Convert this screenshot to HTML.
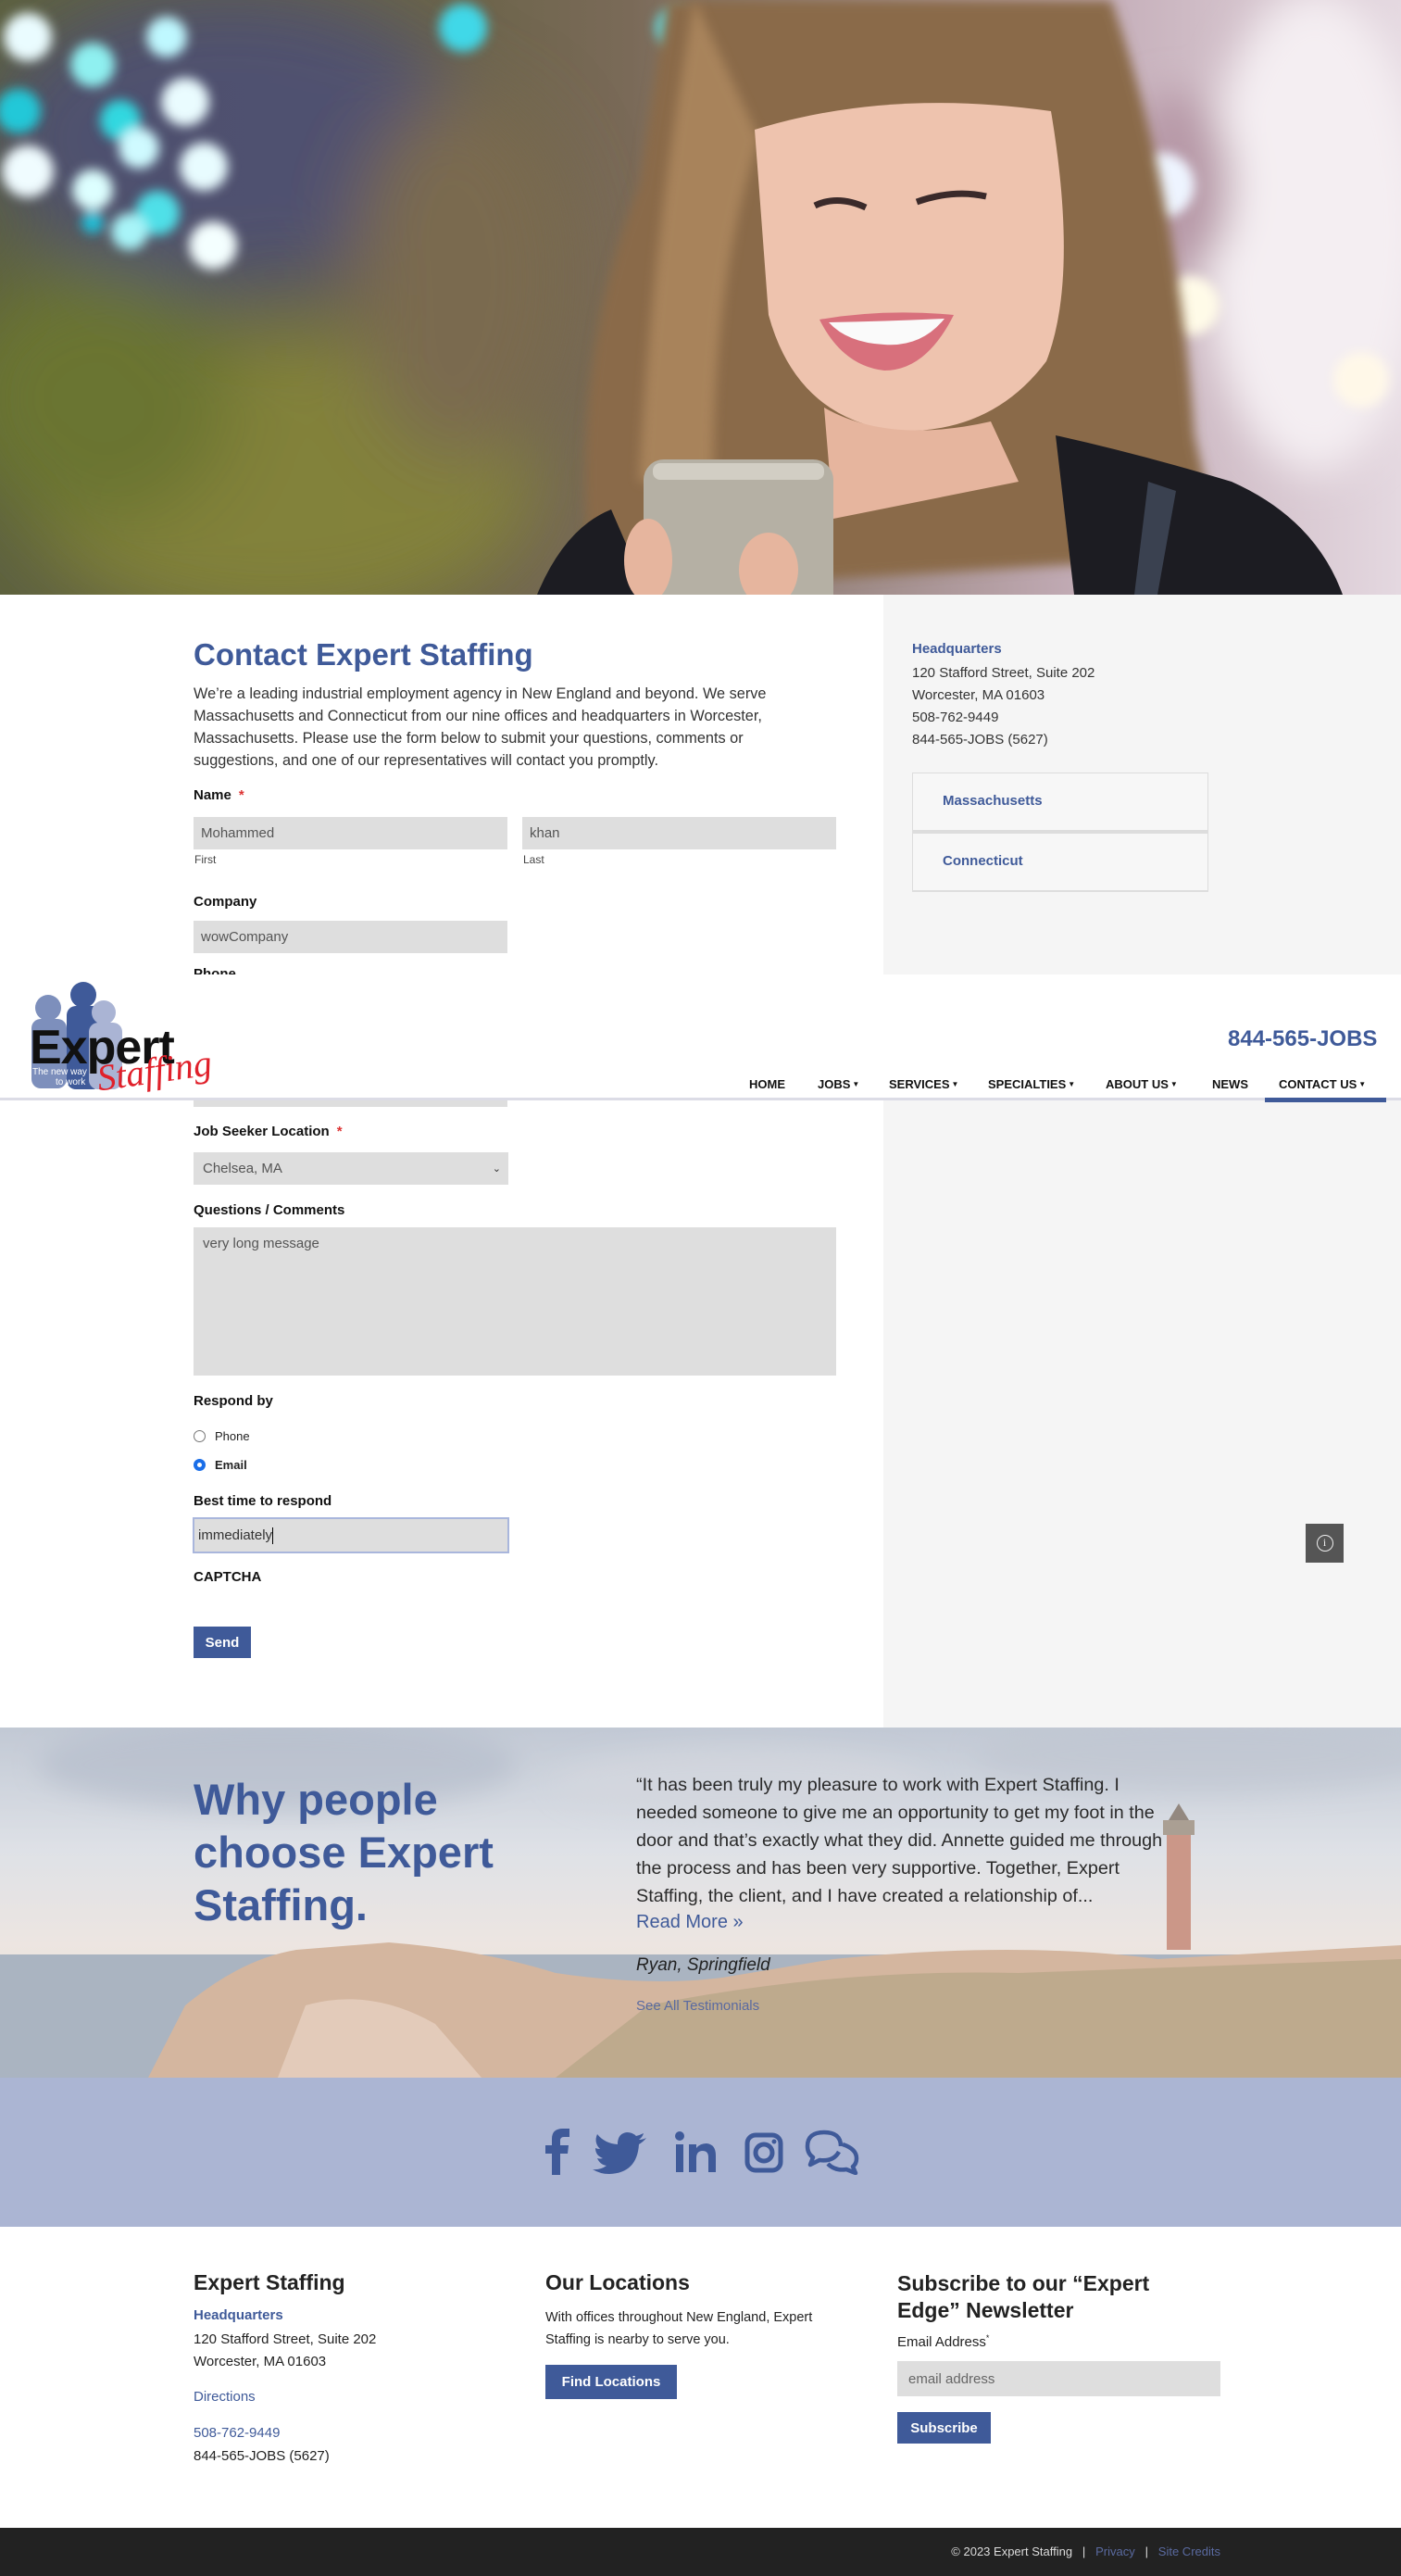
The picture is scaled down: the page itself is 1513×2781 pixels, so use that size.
<!DOCTYPE html>
<html><head><meta charset="utf-8">
<style>
*{margin:0;padding:0;box-sizing:border-box}
body{width:1513px;height:2781px;position:relative;font-family:"Liberation Sans",sans-serif;color:#222;background:#fff;overflow:hidden}
.a{position:absolute;white-space:nowrap}
.lbl{font-weight:bold;font-size:15px;color:#111}
.req{color:#d33;margin-left:8px}
.inp{position:absolute;background:#dedede;font-size:15px;color:#555;padding-left:8px;display:flex;align-items:center}
.blue{color:#3f5a99}
.btn{position:absolute;background:#3f5a99;color:#fff;font-weight:bold;font-size:15px;display:flex;align-items:center;justify-content:center}
.nav{position:absolute;top:1163px;font-size:13px;font-weight:bold;color:#111}
.car{font-size:8px;vertical-align:2px;margin-left:2px}
</style></head><body>

<!-- HERO -->
<svg class="a" style="left:0;top:0" width="1513" height="642" viewBox="0 0 1513 642">
<defs>
<filter id="b1"><feGaussianBlur stdDeviation="22"/></filter>
<filter id="b2"><feGaussianBlur stdDeviation="6"/></filter>
<filter id="b4"><feGaussianBlur stdDeviation="40"/></filter>
<linearGradient id="bg" x1="0" y1="0" x2="1" y2="0">
<stop offset="0" stop-color="#5d6140"/><stop offset=".3" stop-color="#6a6448"/><stop offset=".45" stop-color="#7a6a58"/><stop offset=".78" stop-color="#c4adb8"/><stop offset="1" stop-color="#e4d8e0"/></linearGradient>
</defs>
<rect width="1513" height="642" fill="url(#bg)"/>
<g filter="url(#b4)">
<ellipse cx="250" cy="150" rx="260" ry="160" fill="#4a4e7a" opacity=".8"/>
<ellipse cx="300" cy="520" rx="280" ry="160" fill="#8a8a3a" opacity=".8"/>
<ellipse cx="100" cy="430" rx="150" ry="140" fill="#6a7430"/>
<ellipse cx="500" cy="300" rx="120" ry="200" fill="#7a6a50"/>
</g>
<g filter="url(#b1)">
<ellipse cx="1420" cy="250" rx="120" ry="260" fill="#f4eef2"/>
<ellipse cx="1270" cy="200" rx="60" ry="100" fill="#b89aa8"/>
</g>
<g filter="url(#b2)">
<circle cx="30" cy="40" r="26" fill="#eafcff"/><circle cx="100" cy="70" r="24" fill="#8ff0f0"/>
<circle cx="180" cy="40" r="22" fill="#bff8ff"/><circle cx="200" cy="110" r="26" fill="#eafcff"/>
<circle cx="130" cy="130" r="22" fill="#30d8e0"/><circle cx="20" cy="120" r="24" fill="#20c8d8"/>
<circle cx="150" cy="160" r="22" fill="#cffaff"/><circle cx="220" cy="180" r="26" fill="#e8fcff"/>
<circle cx="30" cy="185" r="28" fill="#f0fcff"/><circle cx="100" cy="205" r="22" fill="#dff"/>
<circle cx="170" cy="230" r="24" fill="#50e0e8"/><circle cx="230" cy="265" r="26" fill="#f4ffff"/>
<circle cx="140" cy="250" r="20" fill="#a8f4f8"/><circle cx="100" cy="240" r="12" fill="#20c0d8"/>
<circle cx="500" cy="30" r="26" fill="#40d8e8"/><circle cx="730" cy="30" r="22" fill="#60e8f0"/>
<circle cx="1255" cy="200" r="35" fill="#eef4ff"/><circle cx="1285" cy="330" r="32" fill="#fffbe8"/>
<circle cx="1470" cy="410" r="30" fill="#fff8e8"/>
</g>
<!-- hair -->
<path d="M720 0 L1200 0 Q1270 200 1290 470 L1320 600 L640 640 Q610 400 690 200 Z" fill="#8a6a48" filter="url(#b2)"/>
<path d="M750 0 Q705 250 690 520 L770 520 Q770 300 820 150 Z" fill="#b08a60" opacity=".8" filter="url(#b2)"/>
<!-- face -->
<path d="M815 140 Q960 95 1135 120 Q1165 300 1130 390 Q1070 470 965 465 Q860 450 830 340 Z" fill="#eec3ae"/>
<path d="M890 440 Q960 480 1070 455 L1100 520 L900 560 Z" fill="#e6b59e"/>
<path d="M880 222 Q905 210 935 224" stroke="#3a2a2a" stroke-width="7" fill="none"/>
<path d="M990 218 Q1030 204 1065 212" stroke="#3a2a2a" stroke-width="7" fill="none"/>
<path d="M885 345 Q955 333 1030 340 Q1000 400 955 400 Q910 395 885 345 Z" fill="#d8707c"/>
<path d="M895 348 Q955 347 1020 344 Q995 375 955 372 Q915 370 895 348 Z" fill="#fafafa"/>
<!-- jacket -->
<path d="M1140 470 Q1230 490 1330 520 Q1420 560 1450 642 L1160 642 Z" fill="#1c1c22"/>
<path d="M580 642 Q610 570 660 550 L700 642 Z" fill="#1c1c22"/>
<path d="M1240 520 L1270 530 L1250 642 L1225 642 Z" fill="#3a4150"/>
<!-- phone -->
<rect x="695" y="496" width="205" height="170" rx="22" fill="#b5b0a4"/>
<rect x="705" y="500" width="185" height="18" rx="8" fill="#d2cec4"/>
<ellipse cx="830" cy="615" rx="32" ry="40" fill="#e6b59e"/>
<ellipse cx="700" cy="605" rx="26" ry="45" fill="#e6b59e"/>
</svg>

<!-- CONTENT -->
<div class="a" style="left:954px;top:642px;width:559px;height:1223px;background:#f5f5f5"></div>
<div class="a blue" style="left:209px;top:688px;font-size:33px;font-weight:bold">Contact Expert Staffing</div>
<div class="a" style="left:209px;top:737px;font-size:16.3px;line-height:24px;color:#333">We’re a leading industrial employment agency in New England and beyond. We serve<br>Massachusetts and Connecticut from our nine offices and headquarters in Worcester,<br>Massachusetts. Please use the form below to submit your questions, comments or<br>suggestions, and one of our representatives will contact you promptly.</div>
<div class="a lbl" style="left:209px;top:850px">Name<span class="req">*</span></div>
<div class="inp" style="left:209px;top:882px;width:339px;height:35px">Mohammed</div>
<div class="inp" style="left:564px;top:882px;width:339px;height:35px">khan</div>
<div class="a" style="left:210px;top:921px;font-size:12px;color:#444">First</div>
<div class="a" style="left:565px;top:921px;font-size:12px;color:#444">Last</div>
<div class="a lbl" style="left:209px;top:965px">Company</div>
<div class="inp" style="left:209px;top:994px;width:339px;height:35px">wowCompany</div>
<div class="a lbl" style="left:209px;top:1043px">Phone</div>
<div class="inp" style="left:209px;top:1075px;width:339px;height:120px"></div>

<div class="a lbl" style="left:209px;top:1213px">Job Seeker Location<span class="req">*</span></div>
<div class="inp" style="left:209px;top:1244px;width:340px;height:35px;padding-left:10px">Chelsea, MA<span style="position:absolute;right:8px;font-size:11px;color:#333">&#8964;</span></div>
<div class="a lbl" style="left:209px;top:1298px">Questions / Comments</div>
<div class="inp" style="left:209px;top:1325px;width:694px;height:160px;align-items:flex-start;padding:9px 10px">very long message</div>
<div class="a lbl" style="left:209px;top:1504px">Respond by</div>
<div class="a" style="left:209px;top:1543px;font-size:13px;color:#222;display:flex;align-items:center"><span style="width:13px;height:13px;border:1px solid #777;border-radius:50%;display:inline-block;margin-right:10px"></span>Phone</div>
<div class="a" style="left:209px;top:1574px;font-size:13px;font-weight:bold;display:flex;align-items:center"><span style="width:13px;height:13px;border:4px solid #1a6ee8;border-radius:50%;display:inline-block;margin-right:10px;background:#fff"></span>Email</div>
<div class="a lbl" style="left:209px;top:1612px">Best time to respond</div>
<div class="inp" style="left:208px;top:1638px;width:342px;height:39px;border:2px solid #a9b6dc;padding-left:4px;color:#333">immediately<span style="width:1px;height:18px;background:#000;display:inline-block"></span></div>
<div class="a lbl" style="left:209px;top:1694px">CAPTCHA</div>
<div class="btn" style="left:209px;top:1756px;width:62px;height:34px">Send</div>
<div class="a" style="left:1410px;top:1645px;width:41px;height:42px;background:#555;display:flex;align-items:center;justify-content:center"><span style="width:18px;height:18px;border:1.5px solid #eee;border-radius:50%;color:#eee;font-size:12px;text-align:center;line-height:15px;font-family:'Liberation Serif',serif">i</span></div>

<!-- sidebar -->
<div class="a blue" style="left:985px;top:692px;font-size:15px;font-weight:bold">Headquarters</div>
<div class="a" style="left:985px;top:715px;font-size:15px;line-height:24px;color:#333">120 Stafford Street, Suite 202<br>Worcester, MA 01603<br>508-762-9449<br>844-565-JOBS (5627)</div>
<div class="a" style="left:985px;top:834px;width:320px;height:65px;background:#f7f7f7;border:1px solid #ddd;border-bottom:3px solid #ddd"></div>
<div class="a" style="left:985px;top:899px;width:320px;height:64px;background:#f7f7f7;border:1px solid #ddd;border-bottom:2px solid #ddd"></div>
<div class="a blue" style="left:1018px;top:856px;font-size:15px;font-weight:bold">Massachusetts</div>
<div class="a blue" style="left:1018px;top:921px;font-size:15px;font-weight:bold">Connecticut</div>

<!-- HEADER overlay -->
<div class="a" style="left:0;top:1052px;width:1513px;height:136px;background:#fff;border-bottom:3px solid #dcdce6"></div>
<svg class="a" style="left:30px;top:1060px" width="210" height="125" viewBox="0 0 210 125">
<circle cx="22" cy="28" r="14" fill="#7d8fbc"/><rect x="4" y="40" width="38" height="75" rx="10" fill="#7d8fbc"/>
<circle cx="60" cy="14" r="14" fill="#3f5a99"/><rect x="42" y="26" width="38" height="90" rx="10" fill="#3f5a99"/>
<circle cx="82" cy="33" r="13" fill="#aab4d4"/><rect x="66" y="44" width="36" height="72" rx="10" fill="#aab4d4"/>
<text x="2" y="88" font-family="Liberation Sans" font-weight="bold" font-size="52" fill="#111" letter-spacing="-1">Expert</text>
<text x="5" y="100" font-family="Liberation Sans Narrow,Liberation Sans" font-size="10" fill="#fff">The new way</text>
<text x="30" y="111" font-family="Liberation Sans Narrow,Liberation Sans" font-size="10" fill="#fff">to work</text>
<text x="75" y="110" font-family="Liberation Serif" font-style="italic" font-size="40" fill="#e0202a" transform="rotate(-8 130 100)">Staffing</text>
</svg>
<div class="a blue" style="left:1326px;top:1108px;font-size:24px;font-weight:bold">844-565-JOBS</div>
<div class="nav" style="left:809px">HOME</div>
<div class="nav" style="left:883px">JOBS<span class="car">▼</span></div>
<div class="nav" style="left:960px">SERVICES<span class="car">▼</span></div>
<div class="nav" style="left:1067px">SPECIALTIES<span class="car">▼</span></div>
<div class="nav" style="left:1194px">ABOUT US<span class="car">▼</span></div>
<div class="nav" style="left:1309px">NEWS</div>
<div class="nav blue" style="left:1381px">CONTACT US<span class="car">▼</span></div>
<div class="a" style="left:1366px;top:1185px;width:131px;height:5px;background:#3f5a99"></div>

<!-- TESTIMONIAL -->
<svg class="a" style="left:0;top:1865px" width="1513" height="378" viewBox="0 0 1513 378">
<defs>
<linearGradient id="sky" x1="0" y1="0" x2="0" y2="1"><stop offset="0" stop-color="#aab4c4"/><stop offset=".35" stop-color="#d2d6de"/><stop offset=".62" stop-color="#e6dcd6"/><stop offset="1" stop-color="#d9cfc8"/></linearGradient>
<filter id="b3"><feGaussianBlur stdDeviation="14"/></filter>
</defs>
<rect width="1513" height="378" fill="url(#sky)"/>
<g filter="url(#b3)" opacity=".7"><ellipse cx="300" cy="40" rx="260" ry="50" fill="#9aa4b8"/><ellipse cx="1300" cy="30" rx="250" ry="40" fill="#a8b0c0"/><ellipse cx="800" cy="60" rx="200" ry="40" fill="#c4c8d2"/></g>
<rect y="245" width="1513" height="133" fill="#8a98aa"/>
<path d="M160 378 L200 300 Q260 250 320 240 L420 232 Q520 240 600 265 Q700 280 780 270 L900 250 Q1100 230 1250 250 L1513 235 L1513 378 Z" fill="#c49a7a"/>
<path d="M600 378 L700 300 Q900 260 1100 265 L1513 250 L1513 378 Z" fill="#a68a62"/>
<path d="M330 300 Q400 280 470 320 L520 378 L300 378 Z" fill="#d9b8a0"/>
<rect x="1260" y="115" width="26" height="125" fill="#b8705a"/><rect x="1256" y="100" width="34" height="16" fill="#8a7a6a"/><path d="M1262 100 L1273 82 L1284 100 Z" fill="#6a5a50"/>
<rect width="1513" height="378" fill="#fff" opacity=".28"/>
</svg>
<div class="a blue" style="left:209px;top:1914px;font-size:47px;font-weight:bold;line-height:57px">Why people<br>choose Expert<br>Staffing.</div>
<div class="a" style="left:687px;top:1912px;font-size:19.8px;line-height:30px;color:#2a2a2a">“It has been truly my pleasure to work with Expert Staffing. I<br>needed someone to give me an opportunity to get my foot in the<br>door and that’s exactly what they did. Annette guided me through<br>the process and has been very supportive. Together, Expert<br>Staffing, the client, and I have created a relationship of...</div>
<div class="a blue" style="left:687px;top:2064px;font-size:20px">Read More »</div>
<div class="a" style="left:687px;top:2111px;font-size:19px;font-style:italic;color:#222">Ryan, Springfield</div>
<div class="a" style="left:687px;top:2157px;font-size:15px;color:#5a6aa0">See All Testimonials</div>

<!-- SOCIAL -->
<div class="a" style="left:0;top:2243px;width:1513px;height:161px;background:#abb5d3"></div>
<svg class="a" style="left:580px;top:2298px" width="360" height="50" viewBox="0 0 360 50" fill="#3f5a99">
<path d="M16 50 V27 H9 V18 H16 V11 Q16 0 28 0 H35 V9 H29 Q25 9 25 13 V18 H34 L33 27 H25 V50 Z"/>
<path d="M118 10 Q114 12 110 12 Q114 9 115 5 Q111 7 107 8 Q103 4 97 4 Q88 5 87 15 V17 Q73 16 65 6 Q61 15 68 22 Q65 22 63 21 Q63 29 71 32 Q68 33 65 32 Q68 39 75 40 Q68 45 60 44 Q68 49 78 49 Q108 48 110 17 Q115 14 118 10 Z"/>
<rect x="150" y="17" width="8" height="30"/><circle cx="154" cy="8" r="5"/>
<path d="M164 17 H172 V21 Q176 16 183 16 Q193 17 193 29 V47 H185 V31 Q185 24 179 24 Q172 24 172 32 V47 H164 Z"/>
<rect x="227" y="7" width="36" height="38" rx="9" fill="none" stroke="#3f5a99" stroke-width="5"/><circle cx="245" cy="26" r="9" fill="none" stroke="#3f5a99" stroke-width="5"/><circle cx="256" cy="14" r="2.5"/>
<path d="M310 4 Q292 4 292 19 Q292 27 298 31 L295 39 L305 34 Q320 36 326 25" fill="none" stroke="#3f5a99" stroke-width="4.5" stroke-linejoin="round"/>
<path d="M310 4 Q328 4 328 19" fill="none" stroke="#3f5a99" stroke-width="4.5"/>
<path d="M330 17 Q345 22 345 32 Q345 38 341 41 L344 48 L334 44 Q322 46 314 38" fill="none" stroke="#3f5a99" stroke-width="4.5" stroke-linejoin="round"/>
</svg>

<!-- FOOTER -->
<div class="a" style="left:209px;top:2451px;font-size:23px;font-weight:bold;color:#222">Expert Staffing</div>
<div class="a blue" style="left:209px;top:2491px;font-size:15px;font-weight:bold">Headquarters</div>
<div class="a" style="left:209px;top:2514px;font-size:15px;line-height:24px;color:#222">120 Stafford Street, Suite 202<br>Worcester, MA 01603</div>
<div class="a blue" style="left:209px;top:2579px;font-size:15px">Directions</div>
<div class="a blue" style="left:209px;top:2618px;font-size:15px">508-762-9449</div>
<div class="a" style="left:209px;top:2643px;font-size:15px;color:#222">844-565-JOBS (5627)</div>

<div class="a" style="left:589px;top:2451px;font-size:23px;font-weight:bold;color:#222">Our Locations</div>
<div class="a" style="left:589px;top:2490px;font-size:14.5px;line-height:24px;color:#222">With offices throughout New England, Expert<br>Staffing is nearby to serve you.</div>
<div class="btn" style="left:589px;top:2553px;width:142px;height:37px">Find Locations</div>

<div class="a" style="left:969px;top:2451px;font-size:23px;font-weight:bold;color:#222;line-height:29px">Subscribe to our “Expert<br>Edge” Newsletter</div>
<div class="a" style="left:969px;top:2519px;font-size:15px;color:#222">Email Address<sup style="font-size:9px">*</sup></div>
<div class="inp" style="left:969px;top:2549px;width:349px;height:38px;padding-left:12px;color:#666">email address</div>
<div class="btn" style="left:969px;top:2604px;width:101px;height:34px">Subscribe</div>

<div class="a" style="left:0;top:2729px;width:1513px;height:52px;background:#222"></div>
<div class="a" style="right:195px;top:2747px;font-size:13px;color:#ddd">© 2023 Expert Staffing &nbsp;&nbsp;| &nbsp;&nbsp;<span style="color:#5a6aa0">Privacy</span> &nbsp;&nbsp;| &nbsp;&nbsp;<span style="color:#5a6aa0">Site Credits</span></div>
</body></html>
